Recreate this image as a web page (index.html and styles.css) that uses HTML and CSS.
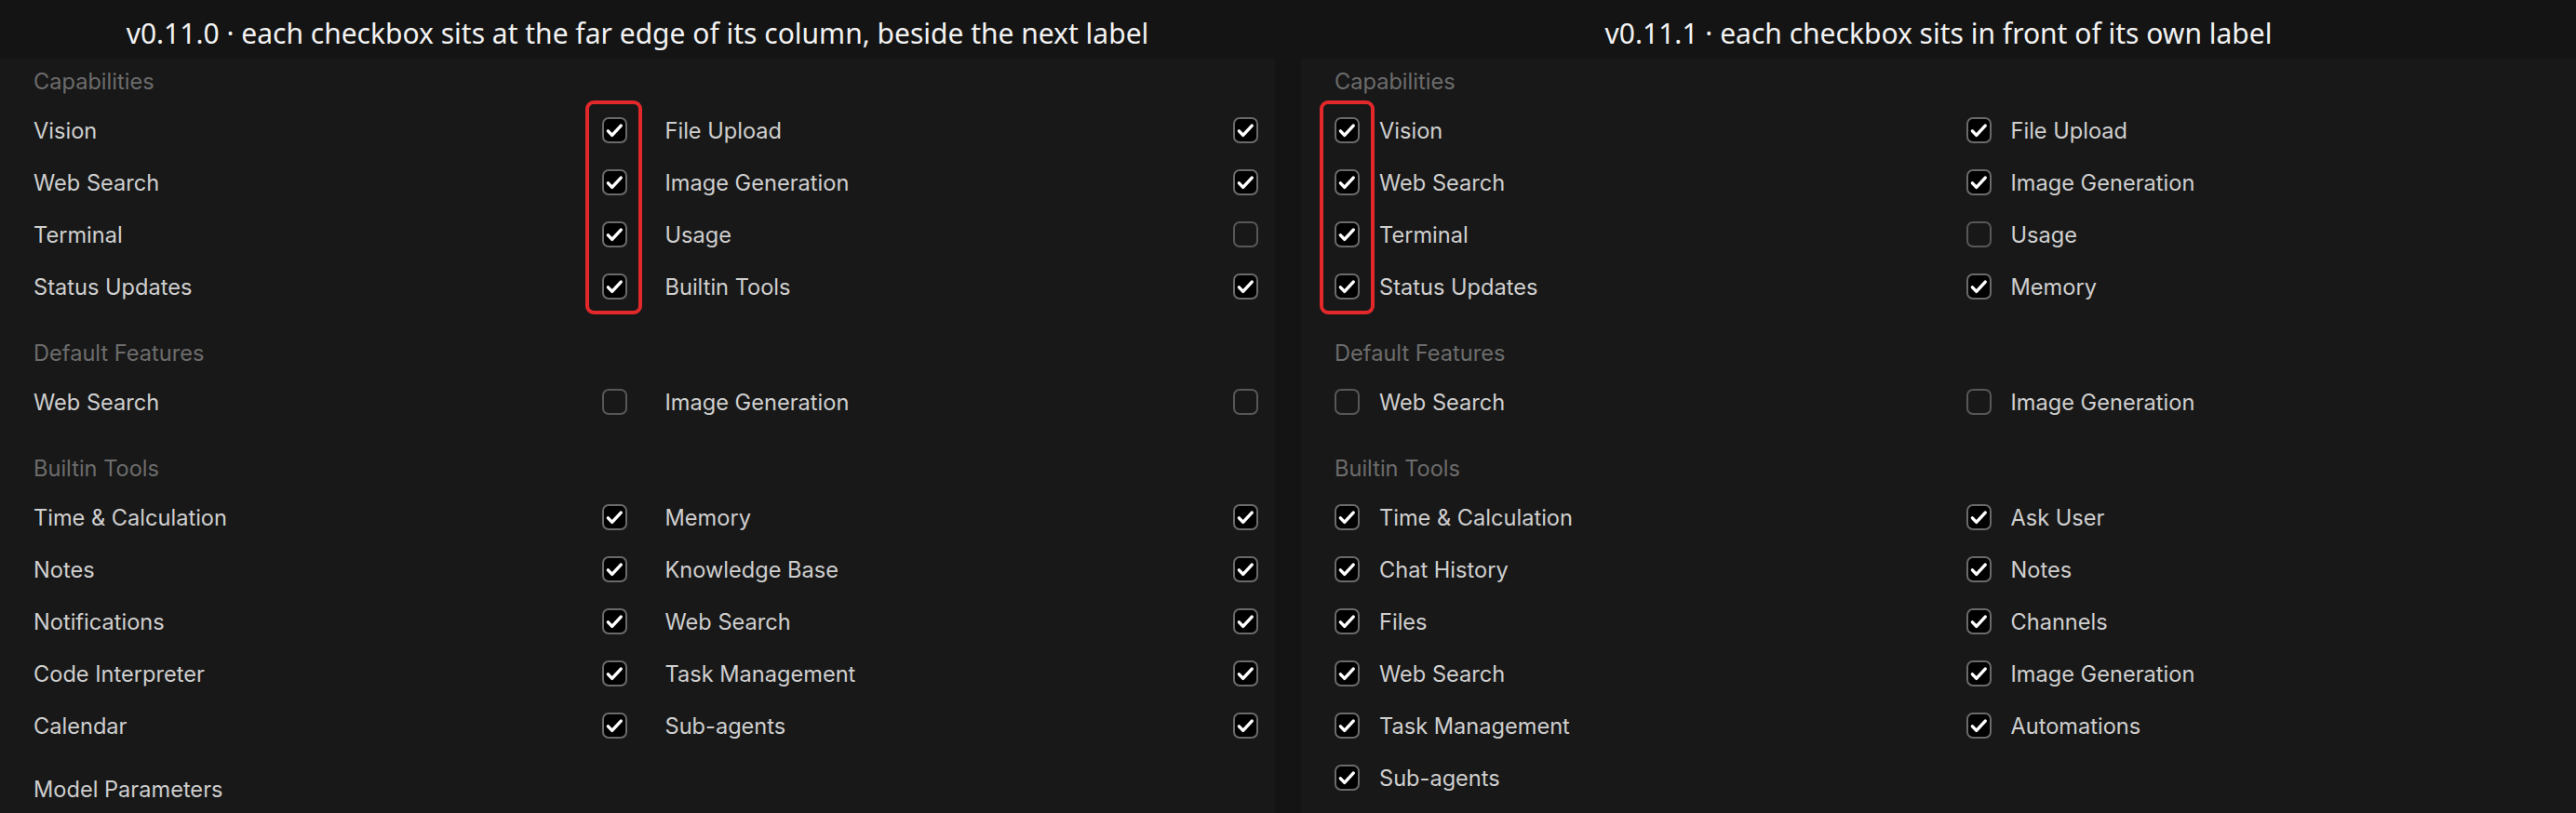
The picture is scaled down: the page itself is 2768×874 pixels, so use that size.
FILE: index.html
```html
<!DOCTYPE html>
<html lang="en">
<head>
<meta charset="utf-8">
<title>Checkbox alignment comparison</title>
<link rel="stylesheet" href="styles.css">
</head>
<body>
<div class="page">
  <section class="pane pane--old">
    <h2 class="pane-title">v0.11.0 · each checkbox sits at the far edge of its column, beside the next label</h2>
    <div class="panel">
      <div class="section">
        <div class="section-title">Capabilities</div>
        <div class="grid grid--old">
          <div class="item"><span class="label">Vision</span><span class="cb cb--on"><svg viewBox="0 0 24 24"><path d="M4.6 12.9l4.5 4.7L19 6.9"/></svg></span></div>
          <div class="item"><span class="label">File Upload</span><span class="cb cb--on"><svg viewBox="0 0 24 24"><path d="M4.6 12.9l4.5 4.7L19 6.9"/></svg></span></div>
          <div class="item"><span class="label">Web Search</span><span class="cb cb--on"><svg viewBox="0 0 24 24"><path d="M4.6 12.9l4.5 4.7L19 6.9"/></svg></span></div>
          <div class="item"><span class="label">Image Generation</span><span class="cb cb--on"><svg viewBox="0 0 24 24"><path d="M4.6 12.9l4.5 4.7L19 6.9"/></svg></span></div>
          <div class="item"><span class="label">Terminal</span><span class="cb cb--on"><svg viewBox="0 0 24 24"><path d="M4.6 12.9l4.5 4.7L19 6.9"/></svg></span></div>
          <div class="item"><span class="label">Usage</span><span class="cb"></span></div>
          <div class="item"><span class="label">Status Updates</span><span class="cb cb--on"><svg viewBox="0 0 24 24"><path d="M4.6 12.9l4.5 4.7L19 6.9"/></svg></span></div>
          <div class="item"><span class="label">Builtin Tools</span><span class="cb cb--on"><svg viewBox="0 0 24 24"><path d="M4.6 12.9l4.5 4.7L19 6.9"/></svg></span></div>
          <div class="mark mark--old"></div>
        </div>
      </div>
      <div class="section">
        <div class="section-title">Default Features</div>
        <div class="grid grid--old">
          <div class="item"><span class="label">Web Search</span><span class="cb"></span></div>
          <div class="item"><span class="label">Image Generation</span><span class="cb"></span></div>
        </div>
      </div>
      <div class="section">
        <div class="section-title">Builtin Tools</div>
        <div class="grid grid--old">
          <div class="item"><span class="label">Time &amp; Calculation</span><span class="cb cb--on"><svg viewBox="0 0 24 24"><path d="M4.6 12.9l4.5 4.7L19 6.9"/></svg></span></div>
          <div class="item"><span class="label">Memory</span><span class="cb cb--on"><svg viewBox="0 0 24 24"><path d="M4.6 12.9l4.5 4.7L19 6.9"/></svg></span></div>
          <div class="item"><span class="label">Notes</span><span class="cb cb--on"><svg viewBox="0 0 24 24"><path d="M4.6 12.9l4.5 4.7L19 6.9"/></svg></span></div>
          <div class="item"><span class="label">Knowledge Base</span><span class="cb cb--on"><svg viewBox="0 0 24 24"><path d="M4.6 12.9l4.5 4.7L19 6.9"/></svg></span></div>
          <div class="item"><span class="label">Notifications</span><span class="cb cb--on"><svg viewBox="0 0 24 24"><path d="M4.6 12.9l4.5 4.7L19 6.9"/></svg></span></div>
          <div class="item"><span class="label">Web Search</span><span class="cb cb--on"><svg viewBox="0 0 24 24"><path d="M4.6 12.9l4.5 4.7L19 6.9"/></svg></span></div>
          <div class="item"><span class="label">Code Interpreter</span><span class="cb cb--on"><svg viewBox="0 0 24 24"><path d="M4.6 12.9l4.5 4.7L19 6.9"/></svg></span></div>
          <div class="item"><span class="label">Task Management</span><span class="cb cb--on"><svg viewBox="0 0 24 24"><path d="M4.6 12.9l4.5 4.7L19 6.9"/></svg></span></div>
          <div class="item"><span class="label">Calendar</span><span class="cb cb--on"><svg viewBox="0 0 24 24"><path d="M4.6 12.9l4.5 4.7L19 6.9"/></svg></span></div>
          <div class="item"><span class="label">Sub-agents</span><span class="cb cb--on"><svg viewBox="0 0 24 24"><path d="M4.6 12.9l4.5 4.7L19 6.9"/></svg></span></div>
        </div>
      </div>
      <div class="footer-title">Model Parameters</div>
    </div>
  </section>

  <section class="pane pane--new">
    <h2 class="pane-title">v0.11.1 · each checkbox sits in front of its own label</h2>
    <div class="panel">
      <div class="section">
        <div class="section-title">Capabilities</div>
        <div class="grid grid--new">
          <div class="item"><span class="cb cb--on"><svg viewBox="0 0 24 24"><path d="M4.6 12.9l4.5 4.7L19 6.9"/></svg></span><span class="label">Vision</span></div>
          <div class="item"><span class="cb cb--on"><svg viewBox="0 0 24 24"><path d="M4.6 12.9l4.5 4.7L19 6.9"/></svg></span><span class="label">File Upload</span></div>
          <div class="item"><span class="cb cb--on"><svg viewBox="0 0 24 24"><path d="M4.6 12.9l4.5 4.7L19 6.9"/></svg></span><span class="label">Web Search</span></div>
          <div class="item"><span class="cb cb--on"><svg viewBox="0 0 24 24"><path d="M4.6 12.9l4.5 4.7L19 6.9"/></svg></span><span class="label">Image Generation</span></div>
          <div class="item"><span class="cb cb--on"><svg viewBox="0 0 24 24"><path d="M4.6 12.9l4.5 4.7L19 6.9"/></svg></span><span class="label">Terminal</span></div>
          <div class="item"><span class="cb"></span><span class="label">Usage</span></div>
          <div class="item"><span class="cb cb--on"><svg viewBox="0 0 24 24"><path d="M4.6 12.9l4.5 4.7L19 6.9"/></svg></span><span class="label">Status Updates</span></div>
          <div class="item"><span class="cb cb--on"><svg viewBox="0 0 24 24"><path d="M4.6 12.9l4.5 4.7L19 6.9"/></svg></span><span class="label">Memory</span></div>
          <div class="mark mark--new"></div>
        </div>
      </div>
      <div class="section">
        <div class="section-title">Default Features</div>
        <div class="grid grid--new">
          <div class="item"><span class="cb"></span><span class="label">Web Search</span></div>
          <div class="item"><span class="cb"></span><span class="label">Image Generation</span></div>
        </div>
      </div>
      <div class="section">
        <div class="section-title">Builtin Tools</div>
        <div class="grid grid--new">
          <div class="item"><span class="cb cb--on"><svg viewBox="0 0 24 24"><path d="M4.6 12.9l4.5 4.7L19 6.9"/></svg></span><span class="label">Time &amp; Calculation</span></div>
          <div class="item"><span class="cb cb--on"><svg viewBox="0 0 24 24"><path d="M4.6 12.9l4.5 4.7L19 6.9"/></svg></span><span class="label">Ask User</span></div>
          <div class="item"><span class="cb cb--on"><svg viewBox="0 0 24 24"><path d="M4.6 12.9l4.5 4.7L19 6.9"/></svg></span><span class="label">Chat History</span></div>
          <div class="item"><span class="cb cb--on"><svg viewBox="0 0 24 24"><path d="M4.6 12.9l4.5 4.7L19 6.9"/></svg></span><span class="label">Notes</span></div>
          <div class="item"><span class="cb cb--on"><svg viewBox="0 0 24 24"><path d="M4.6 12.9l4.5 4.7L19 6.9"/></svg></span><span class="label">Files</span></div>
          <div class="item"><span class="cb cb--on"><svg viewBox="0 0 24 24"><path d="M4.6 12.9l4.5 4.7L19 6.9"/></svg></span><span class="label">Channels</span></div>
          <div class="item"><span class="cb cb--on"><svg viewBox="0 0 24 24"><path d="M4.6 12.9l4.5 4.7L19 6.9"/></svg></span><span class="label">Web Search</span></div>
          <div class="item"><span class="cb cb--on"><svg viewBox="0 0 24 24"><path d="M4.6 12.9l4.5 4.7L19 6.9"/></svg></span><span class="label">Image Generation</span></div>
          <div class="item"><span class="cb cb--on"><svg viewBox="0 0 24 24"><path d="M4.6 12.9l4.5 4.7L19 6.9"/></svg></span><span class="label">Task Management</span></div>
          <div class="item"><span class="cb cb--on"><svg viewBox="0 0 24 24"><path d="M4.6 12.9l4.5 4.7L19 6.9"/></svg></span><span class="label">Automations</span></div>
          <div class="item"><span class="cb cb--on"><svg viewBox="0 0 24 24"><path d="M4.6 12.9l4.5 4.7L19 6.9"/></svg></span><span class="label">Sub-agents</span></div>
        </div>
      </div>
    </div>
  </section>
</div>
</body>
</html>
```

FILE: styles.css
```css
html, body {
  margin: 0;
  padding: 0;
  background: #141414;
  overflow: hidden;
}

.page {
  display: grid;
  grid-template-columns: 1370px 1370px;
  column-gap: 28px;
  width: 2768px;
  height: 874px;
}

.pane {
  display: flex;
  flex-direction: column;
  min-height: 0;
  overflow: hidden;
}

.pane-title {
  margin: 0;
  height: 63px;
  box-sizing: border-box;
  padding-top: 8px;
  line-height: 55px;
  text-align: center;
  font-family: "Noto Sans", "Open Sans", sans-serif;
  font-weight: 400;
  font-size: 30px;
  color: #f2f2f2;
  white-space: nowrap;
  flex: none;
}

.panel {
  flex: 1;
  background: #181818;
  padding: 9px 18px 0 36px;
  font-family: Inter, "Noto Sans", sans-serif;
  font-size: 23.6px;
  overflow: hidden;
}

.section {
  margin-bottom: 28px;
}

.section-title {
  line-height: 32px;
  margin-bottom: 8px;
  color: #6c6c6c;
}

.footer-title {
  line-height: 32px;
  margin-top: -3px;
  color: #cdcdcd;
}

.grid {
  position: relative;
  display: grid;
  grid-template-columns: 1fr 1fr;
  column-gap: 41px;
  grid-auto-rows: 56px;
}

.item {
  display: flex;
  align-items: center;
  min-width: 0;
}

.grid--old .item {
  justify-content: space-between;
}

.grid--new .item {
  gap: 21px;
}

.label {
  color: #cfcfcf;
  white-space: nowrap;
  line-height: 29px;
}

.cb {
  flex: none;
  width: 27px;
  height: 28px;
  box-sizing: border-box;
  border: 2px solid #575757;
  border-radius: 7px;
  display: flex;
}

.cb--on {
  background: #000;
  border-color: #6a6a6a;
}

.cb svg {
  width: 100%;
  height: 100%;
  fill: none;
  stroke: #ffffff;
  stroke-width: 3.6;
  stroke-linecap: round;
  stroke-linejoin: round;
}

.mark {
  position: absolute;
  top: -4px;
  height: 230px;
  box-sizing: border-box;
  border: 4px solid #e3282b;
  border-radius: 9px;
  pointer-events: none;
}

.mark--old {
  left: 593px;
  width: 61px;
}

.mark--new {
  left: -16px;
  width: 59px;
}
```
